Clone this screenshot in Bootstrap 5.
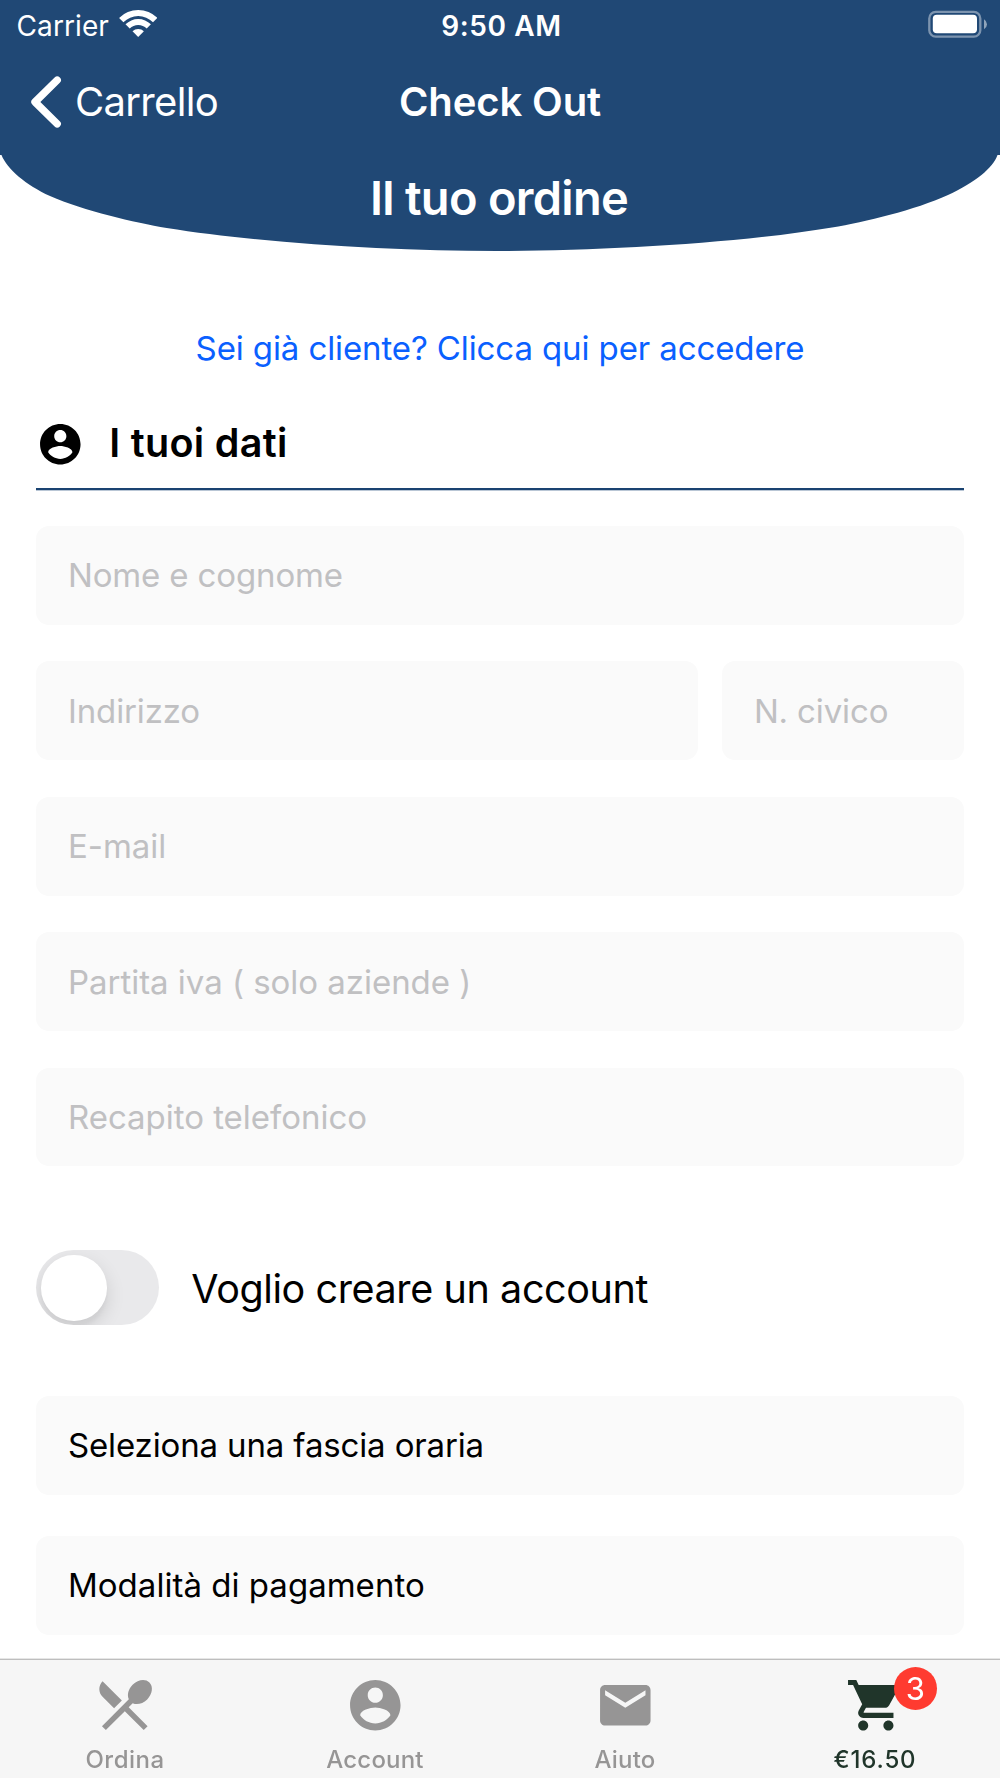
<!DOCTYPE html>
<html lang="it">
<head>
<meta charset="utf-8">
<meta name="viewport" content="width=device-width, initial-scale=1">
<title>Check Out</title>
<link href="https://cdn.jsdelivr.net/npm/bootstrap@5.3.0/dist/css/bootstrap.min.css" rel="stylesheet">
<style>
  :root { --navy: #204875; --field: #fafafa; --muted: #969595; --cart: #20352a; }
  body { font-family: Inter, "Liberation Sans", sans-serif; color: #000; background: #fff; height: 1778px; overflow: hidden; }
  svg { display: block; flex: none; }
  .app-top { background: var(--navy); }
  .status-row { height: 51px; padding: 0 13.5px 0 16.5px; font-size: 28px; line-height: 52px; }
  .carrier { letter-spacing: .1px; }
  .clock { font-weight: 600; letter-spacing: .62px; }
  .nav-row { height: 104px; padding: 0 30px 3px; font-size: 40px; line-height: 48px; }
  .back-link { letter-spacing: -.68px; gap: 13px; }
  .nav-title { font-weight: 600; letter-spacing: -.12px; }
  .hero { height: 96px; }
  .hero svg { z-index: -1; }
  .hero h1 { font-size: 47px; font-weight: 600; letter-spacing: -.72px; line-height: 56px; padding: 15px 2px 0 0; }
  .login-link { margin-top: 77px; font-size: 33px; line-height: 40px; letter-spacing: -.11px; color: #0a60ff; }
  .page-pad { padding: 0 36.3px; }
  .section-head { margin-top: 32px; height: 90px; gap: 24.3px; border-bottom: 2px solid #1a4371; box-shadow: 0 1px 0 #b9c6d5; font-size: 39.5px; }
  .section-head h2 { font-size: inherit; font-weight: 600; letter-spacing: .32px; line-height: 46px; margin-bottom: 3px; }
  .fields { margin-top: 36px; gap: 36.6px; }
  .field.form-control, .picker { height: 98.8px; background: var(--field); border: 0; border-radius: 13px; padding: 0 31.7px; font-size: 33px; line-height: 40px; letter-spacing: -.14px; color: #000; }
  .field::placeholder { color: #c0c0c2; opacity: 1; }
  .field.form-control.loose { letter-spacing: -.03px; }
  .split { gap: 24px; }
  .house-no { width: 241.5px; flex: none; }
  .switch-row { margin-top: 84px; gap: 32px; font-size: 39.5px; letter-spacing: -.4px; }
  .switch-row span { padding-top: 3px; }
  .ios-switch { width: 123px; height: 75px; border-radius: 38px; background: #e9e9eb; padding: 5px; overflow: hidden; }
  .ios-knob { width: 65.5px; height: 65.5px; border-radius: 50%; background: #fff; box-shadow: 0 7px 19px rgba(0,0,0,.12), 0 7px 4px rgba(0,0,0,.03); }
  .pickers { margin-top: 71px; gap: 41.3px; }
  .picker { padding-bottom: 1px; }
  .picker.loose { letter-spacing: .02px; }
  .tab-strip { height: 119px; background: #f6f6f6; border-top: 1px solid #bebebe; box-shadow: 0 -1px 0 #e6e6e6; padding-top: 14.7px; font-size: 24px; font-weight: 500; line-height: 26px; color: var(--muted); }
  .tab-item { gap: 11.7px; letter-spacing: .2px; }
  .tab-item.current { color: var(--cart); letter-spacing: .85px; }
  .tab-item.wide-label { letter-spacing: .5px; }
  .count { left: 48.8px; top: -8px; width: 43.5px; height: 43.5px; line-height: 43.5px; font-size: 31px; font-weight: 400; letter-spacing: 0; background: #ff3b30; }
</style>
<script src="https://cdn.jsdelivr.net/npm/bootstrap@5.3.0/dist/js/bootstrap.bundle.min.js"></script>
</head>
<body>
<header class="text-white">
  <div class="app-top">
    <div class="status-row d-flex">
      <div class="col d-flex">
        <span class="carrier">Carrier</span>
        <svg class="ms-2" width="40" height="51" viewBox="117.500 0 40 51" fill="#fff">
          <path d="M119.600 17.900A27 27 0 0 1 157.800 17.900L153.500 22.200A21 21 0 0 0 123.900 22.200Z"/>
          <path d="M126 24.300A18 18 0 0 1 151.400 24.300L147.200 28.500A12 12 0 0 0 130.200 28.500Z"/>
          <path d="M133 31.300A8 8 0 0 1 144.400 31.300L138.700 37Z"/>
        </svg>
      </div>
      <div class="clock">9:50 AM</div>
      <div class="col d-flex justify-content-end">
        <svg width="59" height="51" viewBox="928 0 59 51">
          <rect x="929.300" y="11.900" width="51" height="24.800" rx="6.500" fill="none" stroke="#fff" stroke-opacity=".42" stroke-width="2.300"/>
          <rect x="932.800" y="14.800" width="44.200" height="18.400" rx="4" fill="#fff"/>
          <path d="M984 19.200Q987 21 987 24.200T984 29.200Z" fill="#fff" fill-opacity=".5"/>
        </svg>
      </div>
    </div>
    <nav class="nav-row d-flex align-items-center">
      <div class="col back-link d-flex align-items-center">
        <svg width="32" height="54" viewBox="30 75 32 54" fill="none" stroke="#fff" stroke-width="7.400" stroke-linecap="round" stroke-linejoin="round"><path d="M57.200 80.200L35 102L57.200 123.800"/></svg>
        <span>Carrello</span>
      </div>
      <div class="nav-title">Check Out</div>
      <div class="col"></div>
    </nav>
  </div>
  <div class="hero position-relative">
    <svg class="position-absolute top-0 start-0" width="1000" height="97" viewBox="0 155 1000 97" fill="#204875">
      <path d="M1.500 154L1.500 155C7 169 26 185 50 196C84 211 135 222.500 166.700 228C260 243 390 251 497 251C605 251 740 243 832 227.500C865 222 915 210 948 195C975 182.500 993 168 997.500 155L997.500 154Z"/>
    </svg>
    <h1 class="text-center m-0">Il tuo ordine</h1>
  </div>
</header>

<main class="page-pad">
  <a href="#" class="login-link d-block text-center text-decoration-none">Sei già cliente? Clicca qui per accedere</a>

  <div class="section-head d-flex align-items-center">
    <svg width="48.6" height="48.6" viewBox="0 0 24 24"><path d="M12 2C6.480 2 2 6.480 2 12s4.480 10 10 10 10-4.480 10-10S17.520 2 12 2zm0 3c1.660 0 3 1.340 3 3s-1.340 3-3 3-3-1.340-3-3 1.340-3 3-3zm0 14.200c-2.500 0-4.710-1.280-6-3.220.03-1.990 4-3.080 6-3.080 1.990 0 5.970 1.090 6 3.080-1.290 1.940-3.500 3.220-6 3.220z"/></svg>
    <h2>I tuoi dati</h2>
  </div>

  <form>
    <div class="fields d-flex flex-column">
      <input class="field form-control" type="text" placeholder="Nome e cognome">
      <div class="split d-flex">
        <input class="field form-control" type="text" placeholder="Indirizzo">
        <input class="field form-control house-no" type="text" placeholder="N. civico">
      </div>
      <input class="field form-control loose" type="text" placeholder="E-mail">
      <input class="field form-control loose" type="text" placeholder="Partita iva ( solo aziende )">
      <input class="field form-control loose" type="text" placeholder="Recapito telefonico">
    </div>

    <div class="switch-row d-flex align-items-center">
      <div class="ios-switch" role="switch" aria-checked="false"><div class="ios-knob"></div></div>
      <span>Voglio creare un account</span>
    </div>

    <div class="pickers d-flex flex-column">
      <button type="button" class="picker text-start">Seleziona una fascia oraria</button>
      <button type="button" class="picker loose text-start">Modalità di pagamento</button>
    </div>
  </form>
</main>

<nav class="tab-strip fixed-bottom d-flex text-center">
  <div class="tab-item wide-label col d-flex flex-column align-items-center">
    <svg width="60.6" height="60.6" viewBox="1.160 1.270 22.040 22.040" fill="currentColor"><path d="M8.100 13.340l2.830-2.830L3.910 3.500c-1.560 1.560-1.560 4.090 0 5.660l4.190 4.180zm6.780-1.810c1.530.71 3.680.21 5.270-1.380 1.910-1.910 2.280-4.650.81-6.120-1.460-1.460-4.200-1.100-6.120.81-1.590 1.590-2.090 3.740-1.380 5.270L3.700 19.870l1.410 1.410L12 14.410l6.880 6.880 1.410-1.410L13.410 13l1.470-1.470z"/></svg>
    <span>Ordina</span>
  </div>
  <div class="tab-item col d-flex flex-column align-items-center">
    <svg width="60.6" height="60.6" viewBox="0 0 24 24" fill="currentColor"><path d="M12 2C6.480 2 2 6.480 2 12s4.480 10 10 10 10-4.480 10-10S17.520 2 12 2zm0 3c1.660 0 3 1.340 3 3s-1.340 3-3 3-3-1.340-3-3 1.340-3 3-3zm0 14.200c-2.500 0-4.710-1.280-6-3.220.03-1.990 4-3.080 6-3.080 1.990 0 5.970 1.090 6 3.080-1.290 1.940-3.500 3.220-6 3.220z"/></svg>
    <span>Account</span>
  </div>
  <div class="tab-item col d-flex flex-column align-items-center">
    <svg width="60.6" height="60.6" viewBox="0 0 24 24" fill="currentColor"><path d="M20 4H4c-1.100 0-1.990.9-1.990 2L2 18c0 1.100.9 2 2 2h16c1.100 0 2-.9 2-2V6c0-1.100-.9-2-2-2zm0 4l-8 5-8-5V6l8 5 8-5v2z"/></svg>
    <span>Aiuto</span>
  </div>
  <div class="tab-item current col d-flex flex-column align-items-center">
    <div class="position-relative">
      <svg width="60.6" height="60.6" viewBox="-.2 0 24 24" fill="currentColor"><path d="M7 18c-1.100 0-1.990.9-1.990 2S5.900 22 7 22s2-.9 2-2-.9-2-2-2zM1 2v2h2l3.600 7.590-1.350 2.450c-.16.28-.25.61-.25.960 0 1.100.9 2 2 2h12v-2H7.420c-.14 0-.25-.11-.25-.25l.03-.12.900-1.630h7.450c.75 0 1.410-.41 1.750-1.030l3.580-6.490c.08-.14.12-.31.12-.48 0-.55-.45-1-1-1H5.210l-.94-2H1zm16 16c-1.100 0-1.990.9-1.990 2s.89 2 1.990 2 2-.9 2-2-.9-2-2-2z"/></svg>
      <span class="count position-absolute rounded-circle text-white">3</span>
    </div>
    <span>€16.50</span>
  </div>
</nav>
</body>
</html>
